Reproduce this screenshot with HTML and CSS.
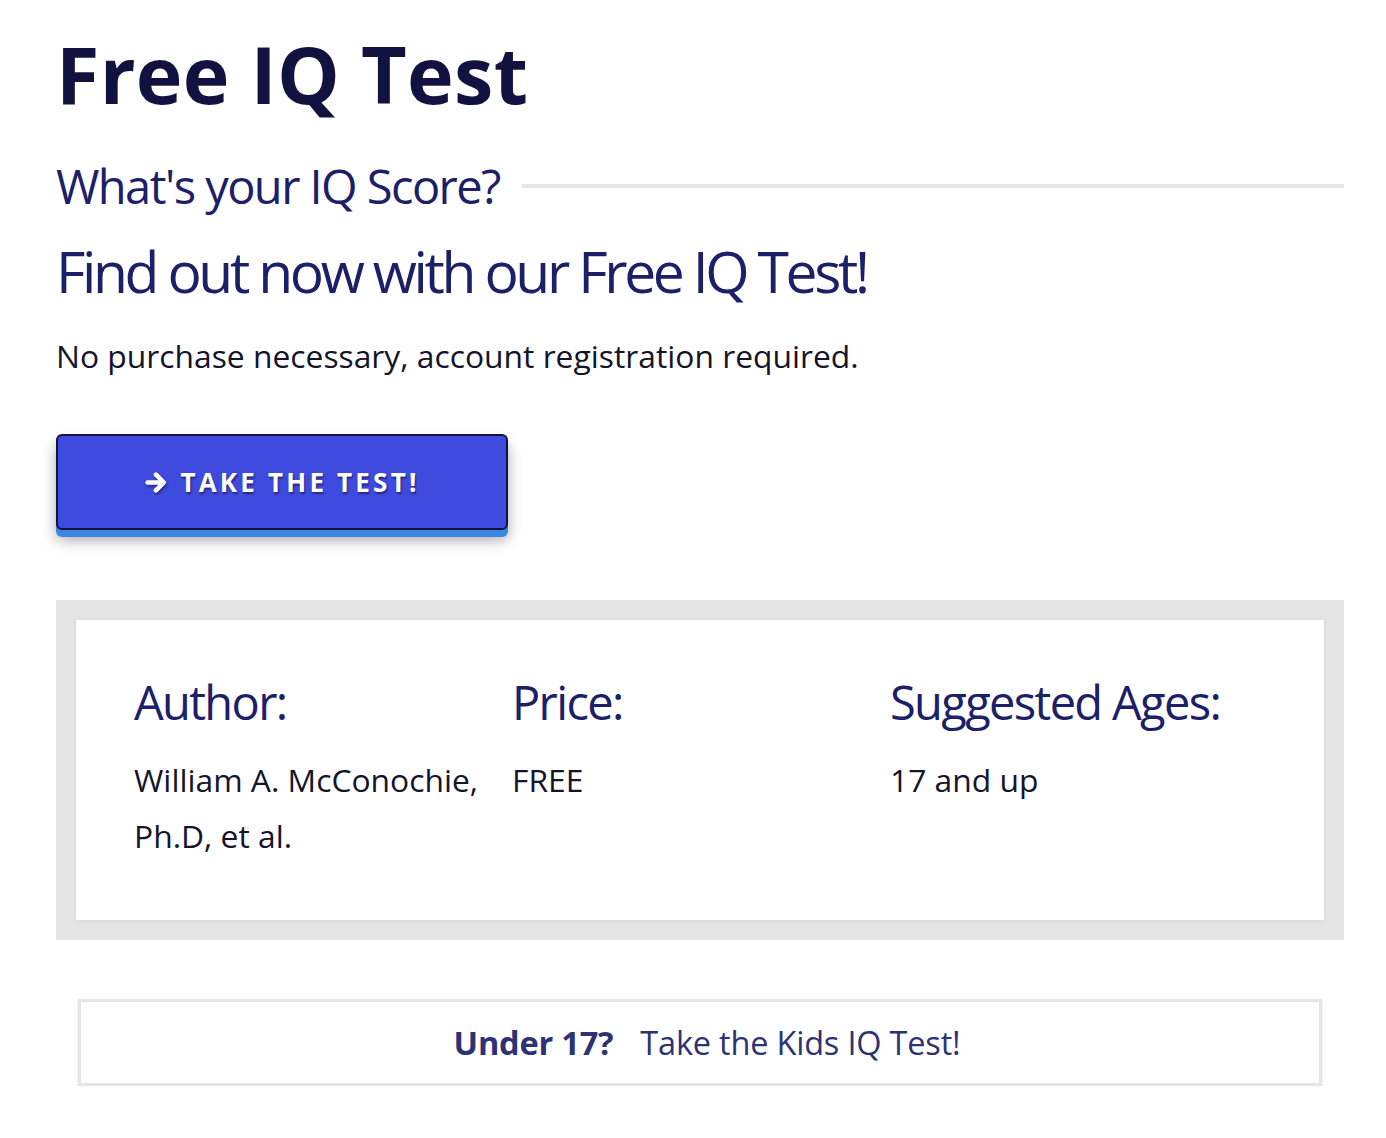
FILE: index.html
```html
<!DOCTYPE html>
<html>
<head>
<meta charset="utf-8">
<link rel="stylesheet" href="styles.css">
</head>
<body>
<main class="page">
  <h1 class="title">Free IQ Test</h1>
  <div class="subrow">
    <h2 class="sub">What's your IQ Score?</h2>
    <div class="rule"></div>
  </div>
  <h3 class="find">Find out now with our Free IQ Test!</h3>
  <p class="note">No purchase necessary, account registration required.</p>
  <div class="btnwrap">
    <a class="btn" href="#">
      <svg class="arrow" viewBox="0 0 24 22" width="25" height="23"><path d="M3.5 11h14M11.5 3.5L19 11l-7.5 7.5" fill="none" stroke="#fff" stroke-width="4.4" stroke-linecap="round" stroke-linejoin="round"/></svg>
      <span>TAKE THE TEST!</span>
    </a>
  </div>
  <section class="info">
    <div class="infoinner">
      <div class="col">
        <h4 class="colh">Author:</h4>
        <p class="colv">William A. McConochie, Ph.D, et al.</p>
      </div>
      <div class="col">
        <h4 class="colh">Price:</h4>
        <p class="colv">FREE</p>
      </div>
      <div class="col">
        <h4 class="colh">Suggested Ages:</h4>
        <p class="colv">17 and up</p>
      </div>
    </div>
  </section>
  <a class="kids" href="#"><b>Under 17?</b><span>Take the Kids IQ Test!</span></a>
</main>
</body>
</html>
```

FILE: styles.css
```css
* { box-sizing: border-box; }
html, body { margin: 0; padding: 0; background: #fff; }
body { font-family: "Open Sans", "DejaVu Sans", sans-serif; }
.page { padding: 24px 42px 0 56px; width: 1386px; }
.title {
  margin: 0;
  font-size: 79px;
  font-weight: 700;
  color: #11123f;
  line-height: 100px;
  letter-spacing: 0.3px;
}
.subrow { display: flex; align-items: center; margin-top: 34px; }
.sub {
  margin: 0;
  font-size: 47px;
  font-weight: 400;
  color: #1b2069;
  letter-spacing: -1.55px;
  line-height: 56px;
  white-space: nowrap;
}
.rule { flex: 1; height: 4px; background: #e6e6e6; margin-left: 22px; margin-top: 0; }
.find {
  margin: 22px 0 0;
  font-size: 57px;
  font-weight: 400;
  color: #1b2069;
  letter-spacing: -3.4px;
  line-height: 70px;
}
.note {
  margin: 30px 0 0;
  font-size: 31.8px;
  color: #14142a;
  line-height: 40px;
}
.btnwrap { margin-top: 58px; }
.btn {
  display: flex;
  align-items: center;
  justify-content: center;
  gap: 11px;
  width: 452px;
  height: 96px;
  padding-top: 0;
  background: #3f4ade;
  border: 2px solid #12133a;
  border-radius: 6px;
  box-shadow: 0 7px 0 #3a86e0, 0 10px 14px rgba(0,0,0,0.35);
  color: #fff;
  text-decoration: none;
  font-weight: 700;
  font-size: 26px;
  letter-spacing: 3.2px;
  text-shadow: 1px 2px 2px rgba(0,0,0,0.45);
}
.arrow { filter: drop-shadow(1px 2px 1px rgba(0,0,0,0.4)); }
.info {
  margin-top: 70px;
  width: 1288px;
  background: #e4e4e4;
  padding: 20px;
}
.infoinner {
  background: #fff;
  box-shadow: 0 0 4px rgba(0,0,0,0.08);
  display: grid;
  grid-template-columns: 378px 378px 1fr;
  padding: 52px 58px 40px;
  min-height: 300px;
}
.colh {
  margin: 0;
  font-size: 47px;
  font-weight: 400;
  color: #1b2069;
  letter-spacing: -1.65px;
  line-height: 60px;
}
.colv {
  margin: 20px 0 0;
  font-size: 31.8px;
  color: #14142a;
  line-height: 56px;
  padding-right: 10px;
}
.kids {
  display: flex;
  justify-content: center;
  align-items: center;
  gap: 27px;
  margin: 59px 0 0 22px;
  width: 1244px;
  height: 87px;
  border: 3px solid #e6e6e6;
  box-shadow: 0 2px 3px rgba(0,0,0,0.12);
  color: #2c3274;
  text-decoration: none;
  font-size: 32.5px;
  letter-spacing: -0.2px;
  padding-top: 0;
  padding-left: 14px;
}
.kids b { font-weight: 700; letter-spacing: -0.2px; }
```
